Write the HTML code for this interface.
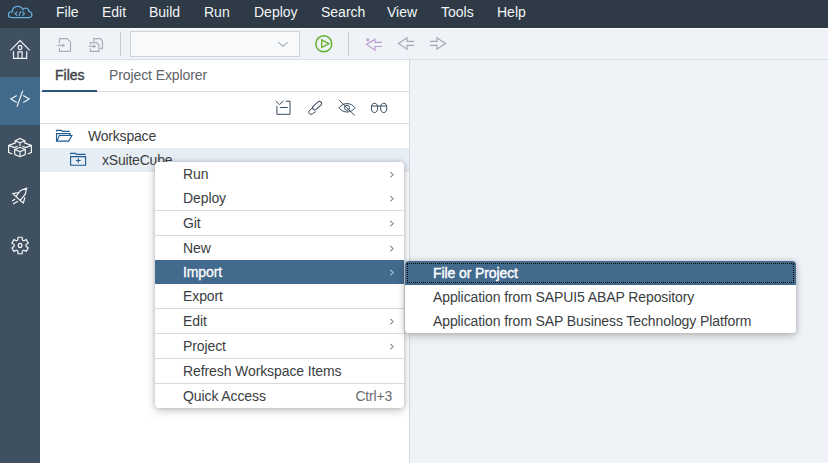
<!DOCTYPE html>
<html><head><meta charset="utf-8">
<style>
*{margin:0;padding:0;box-sizing:border-box}
html,body{width:828px;height:463px;overflow:hidden;background:#f0f2f6;font-family:"Liberation Sans",sans-serif;font-size:14px;color:#32363a;position:relative}
.abs{position:absolute}
#top{left:0;top:0;width:828px;height:28px;background:#2e3a46}
.mi{position:absolute;top:5px;color:#f3f5f7;font-size:14px;line-height:14px;white-space:nowrap}
#side{left:0;top:28px;width:40px;height:435px;background:#3f5060}
#side .act{position:absolute;left:0;top:49px;width:40px;height:48px;background:#426a8d}
#tb{left:40px;top:28px;width:788px;height:32px;background:#eff2f6;border-bottom:1px solid #d9dee3}
#panel{left:40px;top:60px;width:369px;height:403px;background:#fff}
#split{left:409px;top:60px;width:2px;height:403px;background:linear-gradient(90deg,#d6dade 50%,#e7eaee 50%)}
#editor{left:410px;top:60px;width:418px;height:403px;background:#eff2f7}
.txt{position:absolute;white-space:nowrap;line-height:14px}
.menu{position:absolute;background:#fff;border-radius:4px;overflow:hidden;box-shadow:0 0 5px rgba(0,0,0,.18),0 3px 10px rgba(0,0,0,.2)}
.it{position:absolute;left:0;width:100%;height:24px}
.it .l{position:absolute;left:28px;top:5px;line-height:14px;white-space:nowrap;color:#3a3e42;letter-spacing:-0.1px}
.it .r{position:absolute;right:12px;top:5px;line-height:14px;color:#6a6d70;letter-spacing:-0.2px}
.sep{position:absolute;left:0;width:100%;height:1px;background:#d9d9d9}
.hl{background:#426a8d}
.hl .l{color:#fff;-webkit-text-stroke:0.3px #fff}
.ch{position:absolute;left:234px;top:8px;color:#3a3e42}
.hl .ch{color:#fff}
.focus{position:absolute;left:2px;top:2px;right:2px;bottom:2px;border:1px dotted #000}
</style></head><body>
<div id="top" class="abs">
<svg class="abs" style="left:0;top:0" width="40" height="28" viewBox="0 0 40 28">
<path d="M10.6 17.5 H29.6 A3.05 3.05 0 0 0 28.9 11.5 A3.2 3.2 0 0 0 23 9.6 A5.6 5.6 0 0 0 12.3 11.9 A2.85 2.85 0 0 0 10.6 17.5 Z" fill="none" stroke="#62aee0" stroke-width="1.25"/>
<path d="M17.2 11.8 L15.2 13.7 L17.2 15.6 M22.4 11.8 L24.4 13.7 L22.4 15.6 M20.7 11.3 L18.9 16.1" fill="none" stroke="#62aee0" stroke-width="1.2"/>
</svg>
<div class="mi" style="left:56px">File</div>
<div class="mi" style="left:102px">Edit</div>
<div class="mi" style="left:149px">Build</div>
<div class="mi" style="left:204px">Run</div>
<div class="mi" style="left:254px">Deploy</div>
<div class="mi" style="left:321px">Search</div>
<div class="mi" style="left:387px">View</div>
<div class="mi" style="left:441px">Tools</div>
<div class="mi" style="left:497px">Help</div>
</div>

<div id="side" class="abs"><div class="act"></div>
<svg class="abs" style="left:0;top:0" width="40" height="435" viewBox="0 28 40 435">
<g fill="none" stroke="#f2f4f6" stroke-width="1.2" stroke-linejoin="miter">
<path d="M10.4 50.4 L20.1 40.7 L29.7 50.4 M13.5 51.2 V58.3 H26.7 V51.2 M18 58 V51.8 H22.1 V58"/>
<ellipse cx="20.1" cy="47.5" rx="1.8" ry="2.1"/>
<path d="M16.8 95.4 L10.8 99 L16.8 102.6 M23.2 95.4 L29.2 99 L23.2 102.6 M22.8 90.6 L17 106.6"/>
<path d="M20 147.3 L25.3 149.5 V154.5 L20 156.7 L14.7 154.5 V149.5 Z M14.7 149.5 L20 151.6 L25.3 149.5 M20 151.6 V156.7"/>
<path d="M15 144 V140.8 L20 138.4 L25 140.8 V144 M15 140.8 L20 142.8 L25 140.8 M20 142.8 V146"/>
<path d="M14.8 143.1 L8.6 145.4 V152.3 L12.3 154 M8.6 145.4 L14.2 147.6 L17.5 146.2"/>
<path d="M25.2 143.1 L31.4 145.4 V152.3 L27.7 154 M31.4 145.4 L25.8 147.6 L22.5 146.2"/>
<path d="M15.9 196.6 L20.5 190.5 L26.6 188.3 L25.3 194.2 L20.2 200.4 M18.5 192.5 L12.9 193.7 L20.2 200.5 L23.4 203 L24.9 197.4 M12.2 200.9 L15.2 198.9 M13 204 L18 201.2"/>
<path d="M17.85 239.94 L18.04 237.25 L22.16 237.25 L22.35 239.94 L23.79 240.77 L26.21 239.60 L28.27 243.16 L26.04 244.66 L26.04 246.34 L28.27 247.84 L26.21 251.40 L23.79 250.23 L22.35 251.06 L22.16 253.75 L18.04 253.75 L17.85 251.06 L16.41 250.23 L13.99 251.40 L11.93 247.84 L14.16 246.34 L14.16 244.66 L11.93 243.16 L13.99 239.60 L16.41 240.77Z"/>
<ellipse cx="20.1" cy="245.5" rx="1.8" ry="2.1"/>
</g>
</svg>
</div>

<div id="tb" class="abs"></div>
<div class="abs" style="left:40px;top:28px;width:788px;height:1px;background:#fff"></div>
<svg class="abs" style="left:40px;top:28px" width="420" height="32" viewBox="40 28 420 32">
<g fill="none" stroke="#a7afb7" stroke-width="1.15">
<path d="M59.4 43.2 V38.6 H67.3 L70.5 42.2 V51.3 H59.4 V47.4"/>
<path d="M57.2 45.4 H63"/>
<path d="M93.8 41.8 V38.6 H100.3 L102.5 41 V48.4 H100.2"/>
<path d="M90.4 44.4 V42.6 H96.8 L99 45 V51.3 H90.4 V48.2"/>
<path d="M88.8 46.3 H94"/>
</g>
<path d="M62.3 43.5 L65.3 45.4 L62.3 47.3 Z M93.3 44.4 L96.3 46.3 L93.3 48.2 Z" fill="#a7afb7"/>
<rect x="120" y="32" width="1" height="24" fill="#c4cad0"/>
<rect x="130.5" y="31.5" width="169" height="25" fill="#f7f9fb" stroke="#cdd3d9"/>
<path d="M278.3 42.2 L283 46.4 L287.7 42.2" fill="none" stroke="#7d8a96" stroke-width="1"/>
<circle cx="323.8" cy="43.8" r="8" fill="none" stroke="#62b22e" stroke-width="1.5"/>
<path d="M321.7 39.9 L329 43.7 L321.7 47.5 Z" fill="none" stroke="#62b22e" stroke-width="1.3"/>
<rect x="348" y="32" width="1" height="24" fill="#c4cad0"/>
<g fill="none" stroke="#bb9fd3" stroke-width="1.2">
<path d="M382 42.4 H375 V39.4 L366.5 44.4 L375 50.2 V46.5 H382"/>
</g>
<circle cx="367.8" cy="39.8" r="1.6" fill="#bb9fd3"/>
<g fill="none" stroke="#a1aab3" stroke-width="1.2">
<path d="M414 41.3 H407 V37.8 L398.5 43.4 L407 49.2 V45.4 H414"/>
<path d="M430 41.3 H437 V37.8 L445.5 43.4 L437 49.2 V45.4 H430"/>
</g>
</svg>
<div id="panel" class="abs"></div>
<div class="txt" style="left:55px;top:68px;color:#3f4347;-webkit-text-stroke:0.4px #3f4347">Files</div>
<div class="txt" style="left:109px;top:68px;color:#606367;letter-spacing:-0.1px">Project Explorer</div>
<div class="abs" style="left:40px;top:91px;width:369px;height:1px;background:#d8dbdf"></div>
<div class="abs" style="left:42px;top:90px;width:55px;height:2px;background:#2a5682"></div>
<div class="abs" style="left:40px;top:123px;width:369px;height:1px;background:#d8dbdf"></div>
<svg class="abs" style="left:260px;top:92px" width="140" height="31" viewBox="260 92 140 31">
<g fill="none" stroke="#354a5e" stroke-width="1">
<path d="M275.6 101 L279.5 104.6 L283.4 101 M285.7 101.2 H290 V114.3 H276.9 V105.8 M279.8 107.5 H287.7"/>
<rect x="-5.3" y="-2.1" width="10.6" height="4.2" rx="2.1" transform="translate(317.1 105.6) rotate(-42)"/>
<path d="M313.4 106.9 L309.5 110.5 A2.2 2.2 0 0 0 312.5 113.8 L315.6 111.6"/>
<path d="M339 107.8 C343 102.2 351 102.2 355 107.8 C351 113.4 343 113.4 339 107.8 Z M339.4 100.3 L354.6 115.4"/>
<circle cx="347" cy="107.8" r="2.5"/>
<ellipse cx="374.5" cy="107.9" rx="3.1" ry="4.6"/>
<ellipse cx="383.7" cy="107.9" rx="3.1" ry="4.6"/>
<path d="M371.5 106 H386.7"/>
</g>
</svg>
<div class="abs" style="left:40px;top:148px;width:369px;height:24px;background:#e7edf5"></div>
<svg class="abs" style="left:50px;top:124px" width="50" height="48" viewBox="50 124 50 48">
<g fill="none" stroke="#1e5a91" stroke-width="1.1">
<path d="M56.5 131.5 V130.4 H61.3 L62.3 131.4 H69.8 M70.2 135.2 V133.6 H56.5 V141.1 H68.6 L71.9 135.5 H59.3 L57 141.1"/>
<path d="M70.6 154.4 V153.4 H75.5 L76.5 154.4 H85.6 M70.6 165.3 V156.6 H85.6 V165.3 Z M78.3 158.2 V162.7 M76 160.45 H80.7"/>
</g>
</svg>
<div class="txt" style="left:88px;top:129px;color:#3a3e42;letter-spacing:-0.2px">Workspace</div>
<div class="txt" style="left:102px;top:153px;color:#3a3e42;letter-spacing:-0.2px">xSuiteCube</div>
<div id="split" class="abs"></div>
<div id="editor" class="abs"></div>

<div class="menu" style="left:155px;top:162px;width:249px;height:246px">
<div class="it" style="top:0px"><div class="l">Run</div><svg class="ch" width="6" height="9" viewBox="0 0 6 9"><path d="M1.4 1.9 L4.1 4.6 L1.4 7.3" fill="none" stroke="currentColor" stroke-width="0.95"/></svg></div>
<div class="it" style="top:24px"><div class="l">Deploy</div><svg class="ch" width="6" height="9" viewBox="0 0 6 9"><path d="M1.4 1.9 L4.1 4.6 L1.4 7.3" fill="none" stroke="currentColor" stroke-width="0.95"/></svg></div>
<div class="sep" style="top:48px"></div>
<div class="it" style="top:49px"><div class="l">Git</div><svg class="ch" width="6" height="9" viewBox="0 0 6 9"><path d="M1.4 1.9 L4.1 4.6 L1.4 7.3" fill="none" stroke="currentColor" stroke-width="0.95"/></svg></div>
<div class="sep" style="top:73px"></div>
<div class="it" style="top:74px"><div class="l">New</div><svg class="ch" width="6" height="9" viewBox="0 0 6 9"><path d="M1.4 1.9 L4.1 4.6 L1.4 7.3" fill="none" stroke="currentColor" stroke-width="0.95"/></svg></div>
<div class="it hl" style="top:98px"><div class="l">Import</div><svg class="ch" width="6" height="9" viewBox="0 0 6 9"><path d="M1.4 1.9 L4.1 4.6 L1.4 7.3" fill="none" stroke="currentColor" stroke-width="0.95"/></svg></div>
<div class="it" style="top:122px"><div class="l">Export</div></div>
<div class="sep" style="top:146px"></div>
<div class="it" style="top:147px"><div class="l">Edit</div><svg class="ch" width="6" height="9" viewBox="0 0 6 9"><path d="M1.4 1.9 L4.1 4.6 L1.4 7.3" fill="none" stroke="currentColor" stroke-width="0.95"/></svg></div>
<div class="sep" style="top:171px"></div>
<div class="it" style="top:172px"><div class="l">Project</div><svg class="ch" width="6" height="9" viewBox="0 0 6 9"><path d="M1.4 1.9 L4.1 4.6 L1.4 7.3" fill="none" stroke="currentColor" stroke-width="0.95"/></svg></div>
<div class="sep" style="top:196px"></div>
<div class="it" style="top:197px"><div class="l">Refresh Workspace Items</div></div>
<div class="sep" style="top:221px"></div>
<div class="it" style="top:222px"><div class="l">Quick Access</div><div class="r">Ctrl+3</div></div>
</div>
<div class="menu" style="left:405px;top:261px;width:391px;height:72px">
<div class="it hl" style="top:0"><div class="l" style="-webkit-text-stroke:0.4px #fff;letter-spacing:-0.1px">File or Project</div><div class="focus"></div></div>
<div class="it" style="top:24px"><div class="l">Application from SAPUI5 ABAP Repository</div></div>
<div class="it" style="top:48px"><div class="l">Application from SAP Business Technology Platform</div></div>
</div>
</body></html>
